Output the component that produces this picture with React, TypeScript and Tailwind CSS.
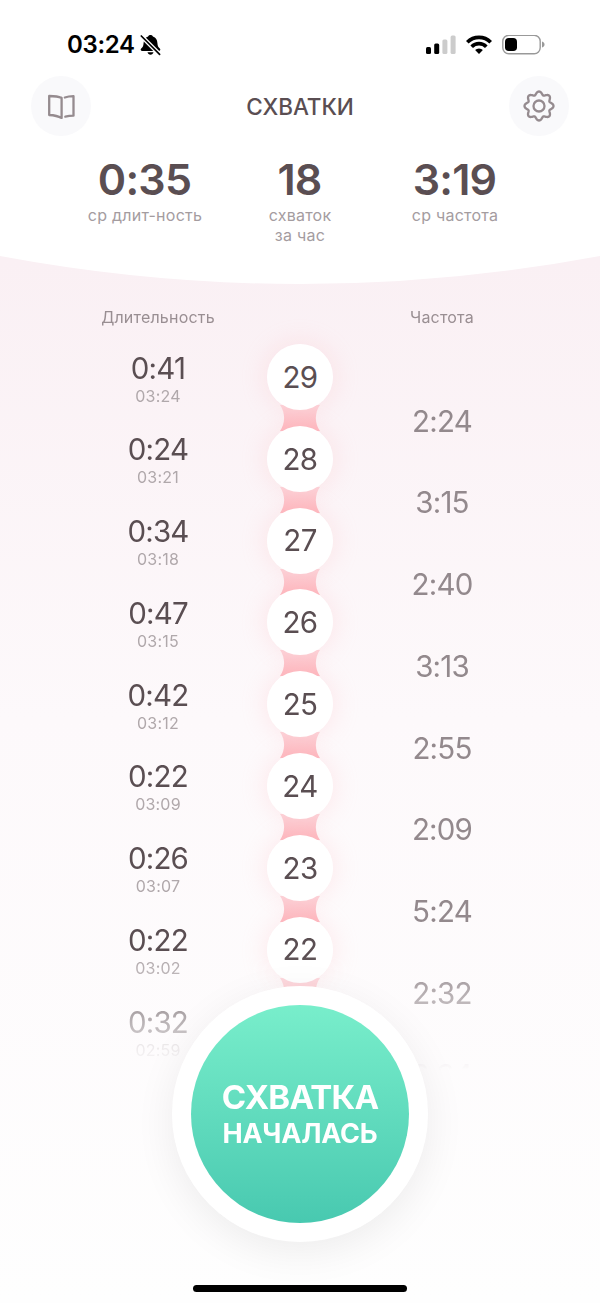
import { useId } from 'react'

const stats = [
  { value: '0:35', label: ['ср длит-ность'] },
  { value: '18', label: ['схваток', 'за час'] },
  { value: '3:19', label: ['ср частота'] },
]

const contractions = [
  { id: 29, duration: '0:41', time: '03:24', interval: '2:24' },
  { id: 28, duration: '0:24', time: '03:21', interval: '3:15' },
  { id: 27, duration: '0:34', time: '03:18', interval: '2:40' },
  { id: 26, duration: '0:47', time: '03:15', interval: '3:13' },
  { id: 25, duration: '0:42', time: '03:12', interval: '2:55' },
  { id: 24, duration: '0:22', time: '03:09', interval: '2:09' },
  { id: 23, duration: '0:26', time: '03:07', interval: '5:24' },
  { id: 22, duration: '0:22', time: '03:02', interval: '2:32' },
  { id: 21, duration: '0:32', time: '02:59', interval: '2:34' },
]

// Eight soft teeth around a 34px box
const gearPath = (() => {
  const points: string[] = []
  for (let i = 0; i < 144; i++) {
    const a = (i / 144) * Math.PI * 2
    const r = 13 + 1.6 * Math.cos(8 * a) - 0.1 * Math.cos(16 * a)
    points.push(`${(17 + r * Math.sin(a)).toFixed(2)} ${(17 - r * Math.cos(a)).toFixed(2)}`)
  }
  return `M${points.join('L')}Z`
})()

function StatusBar() {
  return (
    <div className="flex h-[76px] items-center justify-between pt-[13px] pr-[55px] pl-[67px]">
      <div className="flex items-center gap-[5px]">
        <span className="text-[24px] leading-[30px] font-semibold tracking-[-0.350px] text-black">03:24</span>
        <svg width="22" height="22" viewBox="0 0 22 22">
          <path
            d="M10.500 1c-1.200 0-2 .5-2.400 1.500C5 3.500 3.800 6 3.600 9c-.2 3-.9 4.300-2.400 5.600-.9.9-.6 2.300.7 2.300h17.200c1.300 0 1.600-1.400.7-2.300-1.500-1.300-2.200-2.600-2.400-5.600-.2-3-1.400-5.500-4.500-6.500C12.500 1.500 11.700 1 10.500 1z"
            fill="#000"
          />
          <path d="M7.500 18.300h6c-.4 1.500-1.500 2.400-3 2.400s-2.600-.9-3-2.400z" fill="#000" />
          <path d="M1.500 2.200l18 18" stroke="#fff" strokeWidth="4.200" />
          <path d="M1.300 2l18.300 18.300" stroke="#000" strokeWidth="1.700" strokeLinecap="round" />
        </svg>
      </div>
      <div className="flex items-center">
        <svg width="30" height="20" viewBox="0 0 30 20">
          <rect x="0" y="12" width="5" height="7" rx="1.500" />
          <rect x="8.200" y="8.500" width="5" height="10.500" rx="1.500" />
          <rect x="16.400" y="4.500" width="5" height="14.500" rx="1.500" fill="#ccc" />
          <rect x="24.600" y="0.500" width="5" height="18.500" rx="1.500" fill="#ccc" />
        </svg>
        <svg className="ml-[10px]" width="26" height="20" viewBox="0 0 26 20">
          <g fill="none" stroke="#000" strokeWidth="3.700">
            <path d="M1.300 7.200a16.600 16.600 0 0 1 23.400 0" />
            <path d="M5.700 11.700a10.400 10.400 0 0 1 14.600 0" />
          </g>
          <path d="M13 18.900l-3.900-3.900a5.600 5.600 0 0 1 7.800 0z" />
        </svg>
        <svg className="ml-[10px]" width="43" height="20" viewBox="0 0 43 20">
          <rect x="0.800" y="0.300" width="37.400" height="18.400" rx="6" fill="none" stroke="#999" strokeWidth="1.400" />
          <rect x="3" y="3" width="12" height="13" rx="3.800" />
          <path d="M40 6.500c1.800.5 2.500 1.600 2.500 3s-.7 2.500-2.500 3z" fill="#999" />
        </svg>
      </div>
    </div>
  )
}

function Header() {
  return (
    <header className="flex h-[60px] items-center justify-between px-[31px]">
      <button className="flex size-[60px] items-center justify-center rounded-full bg-[#f9f9fb]">
        <svg
          width="30"
          height="26"
          viewBox="0 0 30 26"
          fill="none"
          stroke="#958b8f"
          strokeWidth="2.300"
          strokeLinecap="round"
          strokeLinejoin="round"
        >
          <path d="M15.600 5v20c-3.200-1.800-7-2.700-12.400-3V3c5.500 0 9.400.5 12.400 2" />
          <path d="M18.800 4.500c2.500-.8 4.800-1.200 8.700-1.300v19.500c-3.300.1-5.500.4-8.200 1" />
        </svg>
      </button>
      <h1 className="pt-px text-[22.500px] leading-[30px] font-medium tracking-[-0.100px] text-[#5a4e52]">СХВАТКИ</h1>
      <button className="flex size-[60px] items-center justify-center rounded-full bg-[#f9f9fb]">
        <svg width="34" height="34" viewBox="0 0 34 34" fill="none" stroke="#958b8f" strokeWidth="2.300">
          <path d={gearPath} strokeLinejoin="round" />
          <circle cx="17" cy="17" r="5.500" />
        </svg>
      </button>
    </header>
  )
}

function Connector() {
  const id = useId()
  return (
    <svg className="absolute top-[61px] left-[13px]" width="40" height="26" viewBox="0 0 40 26">
      <defs>
        <linearGradient id={id} x1="0" y1="0" x2="0" y2="1">
          <stop offset="0.100" stopColor="#fccfd5" />
          <stop offset="0.900" stopColor="#fdb9c0" />
        </linearGradient>
      </defs>
      <path d="M0 0C5.500 8 5.500 18 0 26H40C34.500 18 34.500 8 40 0Z" fill={`url(#${id})`} />
    </svg>
  )
}

export default function App() {
  return (
    <div className="relative h-[1303px] w-[600px] overflow-hidden bg-linear-to-b from-[#faf0f4] from-20% via-[#fdf9fb] via-55% to-[#fefefe] font-['Inter',sans-serif]">
      <div className="h-[256px] bg-white">
        <StatusBar />
        <Header />
        <div className="grid grid-cols-[155px_155px_155px] justify-center pt-[20px]">
          {stats.map((stat) => (
            <div key={stat.value} className="text-center">
              <p className="-ml-px text-[43px] leading-[46px] font-semibold tracking-[-0.800px] text-[#5a4e52]">{stat.value}</p>
              <div className="mt-[4px] text-[16px] leading-[19.500px] tracking-[0.250px] text-[#a49c9f]">
                {stat.label.map((line) => (
                  <p key={line}>{line}</p>
                ))}
              </div>
            </div>
          ))}
        </div>
      </div>

      <main className="pb-6 [mask-image:linear-gradient(to_bottom,#000_700px,transparent_814px)]">
        <svg className="block" width="600" height="28" viewBox="0 0 600 28">
          <path d="M0 0Q300 56 600 0Z" fill="#fff" />
        </svg>
        <div className="grid grid-cols-[142px_142px_142px] justify-center pt-[23px] text-center text-[16px] leading-5 tracking-[0.200px] text-[#998e92]">
          <span>Длительность</span>
          <span className="col-start-3">Частота</span>
        </div>
        <div className="pt-[17px]">
          {contractions.map((item) => (
            <div key={item.id} className="grid h-[81.800px] grid-cols-[142px_142px_142px] justify-center text-center">
              <div className="pt-[5.500px]">
                <p className="text-[29.500px] leading-9 tracking-[-0.800px] text-[#5a4e52]">{item.duration}</p>
                <p className="text-[16px] leading-5 tracking-[0.200px] text-[#b0a8ab]">{item.time}</p>
              </div>
              <div className="relative mx-auto size-[66px]">
                <div className="absolute inset-0 rounded-full shadow-[0_0_24px_2px_rgba(255,180,185,0.240)]" />
                <Connector />
                <div className="relative z-10 flex size-[66px] items-center justify-center rounded-full bg-white text-[29.500px] tracking-[-0.600px] text-[#5a4e52]">
                  {item.id}
                </div>
              </div>
              <p className="pt-[58.500px] text-[29.500px] leading-9 tracking-[-0.800px] text-[#93898d]">{item.interval}</p>
            </div>
          ))}
        </div>
      </main>

      <button className="absolute top-[985.500px] left-[172px] z-20 flex size-[256px] items-center justify-center rounded-full bg-white shadow-[0_10px_40px_rgba(0,0,0,0.070)]">
        <span className="flex size-[218px] flex-col items-center justify-center rounded-full bg-linear-to-b from-[#78eecb] to-[#48c9b0] pt-[2px] text-white">
          <span className="text-[33px] leading-[38px] font-bold tracking-[-0.800px]">СХВАТКА</span>
          <span className="text-[27px] leading-[35px] font-bold tracking-[-0.200px]">НАЧАЛАСЬ</span>
        </span>
      </button>

      <div className="absolute bottom-[11px] left-[193px] h-[7px] w-[214px] rounded-full bg-black" />
    </div>
  )
}
